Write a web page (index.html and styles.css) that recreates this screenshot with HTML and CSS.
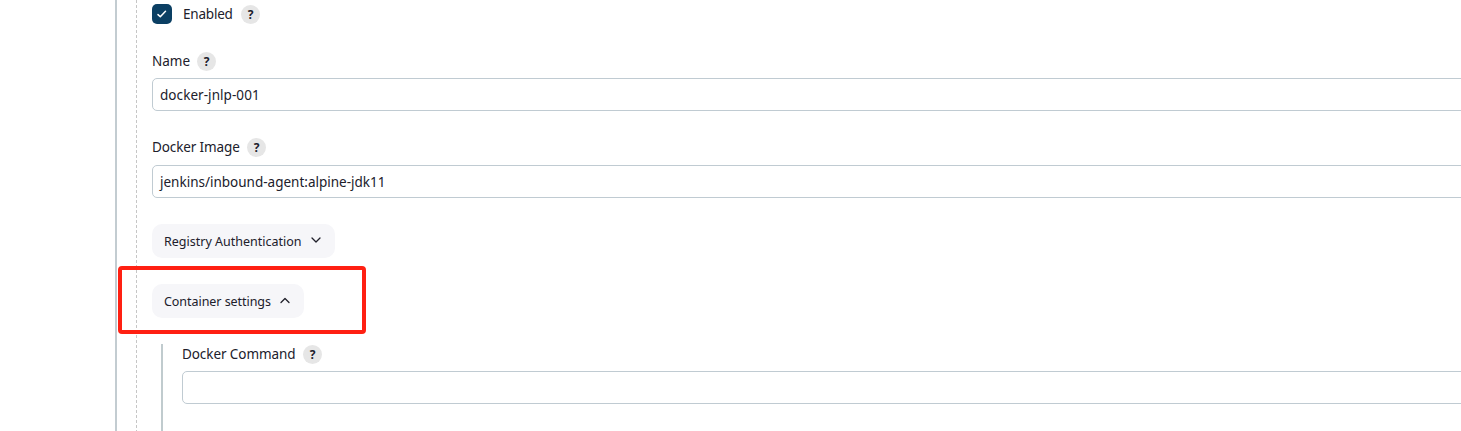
FILE: index.html
```html
<!DOCTYPE html>
<html lang="en">
<head>
<meta charset="utf-8">
<title>Docker agent template</title>
<link rel="stylesheet" href="styles.css">
</head>
<body>
<main class="section">
  <form class="template">
    <div class="check-row">
      <span class="checkbox"><svg width="20" height="20" viewBox="0 0 20 20"><path d="M6 10.6l2.3 2.2 5.2-5.6"/></svg></span>
      <span class="label enabled">Enabled</span><span class="help">?</span>
    </div>
    <div class="field">
      <div class="label-row"><span class="label name">Name</span><span class="help">?</span></div>
      <div class="input"><span class="value-name">docker-jnlp-001</span></div>
    </div>
    <div class="field image-field">
      <div class="label-row"><span class="label image">Docker Image</span><span class="help">?</span></div>
      <div class="input"><span class="value-image">jenkins/inbound-agent:alpine-jdk11</span></div>
    </div>
    <div class="button registry"><span class="text-registry">Registry Authentication</span><svg width="12" height="12" viewBox="0 0 12 12"><path d="M2 4l4 4 4-4"/></svg></div>
    <div class="button container"><span class="text-container">Container settings</span><svg width="12" height="12" viewBox="0 0 12 12"><path d="M2 8.5l4-4 4 4"/></svg></div>
    <div class="nested">
      <div class="label-row"><span class="label command">Docker Command</span><span class="help">?</span></div>
      <div class="input"></div>
    </div>
  </form>
</main>
<div class="highlight"></div>
</body>
</html>
```
FILE: styles.css
```css
* { box-sizing: border-box; }
body {
  margin: 0;
  height: 431px;
  overflow: hidden;
  background: #fff;
  color: #20202b;
  font: 14px/20px "Noto Sans", "Open Sans", sans-serif;
}
.section {
  height: 431px;
  margin-left: 115px;
  padding-left: 19px;
  border-left: 2px solid #c3ccd1;
}
.template {
  height: 431px;
  padding: 4px 0 0 16px;
  background: repeating-linear-gradient(#c6c6c6 0 3px, transparent 3px 5px) 0 0 / 1px 100% no-repeat;
}
.check-row, .label-row { display: flex; align-items: center; height: 20px; }
.checkbox { width: 20px; height: 20px; margin-right: 11px; border-radius: 5px; background: #0b3f63; }
svg { display: block; fill: none; stroke: #20202b; stroke-width: 1.3; stroke-linecap: round; stroke-linejoin: round; }
.checkbox svg { stroke: #fff; stroke-width: 1.5; }
.label { display: block; white-space: nowrap; font-size: 13.5px; }
.enabled { width: 50px; letter-spacing: -0.2px; }
.name { width: 37px; padding-bottom: 1px; }
.image { width: 87px; letter-spacing: -0.12px; }
.command { width: 113px; padding-bottom: 1px; letter-spacing: -0.08px; }
.help {
  width: 19px;
  height: 19px;
  margin-left: 8px;
  border-radius: 50%;
  background: #e6e6e6;
  font-size: 12px;
  font-weight: 700;
  line-height: 19px;
  text-align: center;
}
.field { margin-top: 27px; }
.image-field { margin-top: 26px; }
.input {
  display: flex;
  align-items: center;
  height: 33px;
  margin: 7px -10px 0 0;
  padding: 0 7px;
  border: 1px solid #c0cbd2;
  border-radius: 5px;
  white-space: nowrap;
  font-size: 13.5px;
}
.value-name { letter-spacing: 0.06px; }
.image-field .input { margin-top: 8px; }
.button {
  display: flex;
  align-items: center;
  height: 34px;
  padding: 2px 12px 0;
  border-radius: 10px;
  background: #f6f6f9;
  white-space: nowrap;
  font-size: 12.5px;
}
.button svg { margin: -4px 0 0 8px; }
.registry { width: 183px; margin-top: 26px; }
.container { width: 152px; margin-top: 26px; }
.text-registry { width: 138px; }
.text-container { width: 107px; letter-spacing: -0.05px; }
.nested {
  height: 100px;
  margin: 26px 0 0 9px;
  padding-left: 19px;
  border-left: 2px solid #c0cbce;
}
.highlight {
  position: absolute;
  left: 118px;
  top: 266px;
  width: 248px;
  height: 68px;
  border: 4px solid #ff2012;
  border-radius: 4px;
}
```
